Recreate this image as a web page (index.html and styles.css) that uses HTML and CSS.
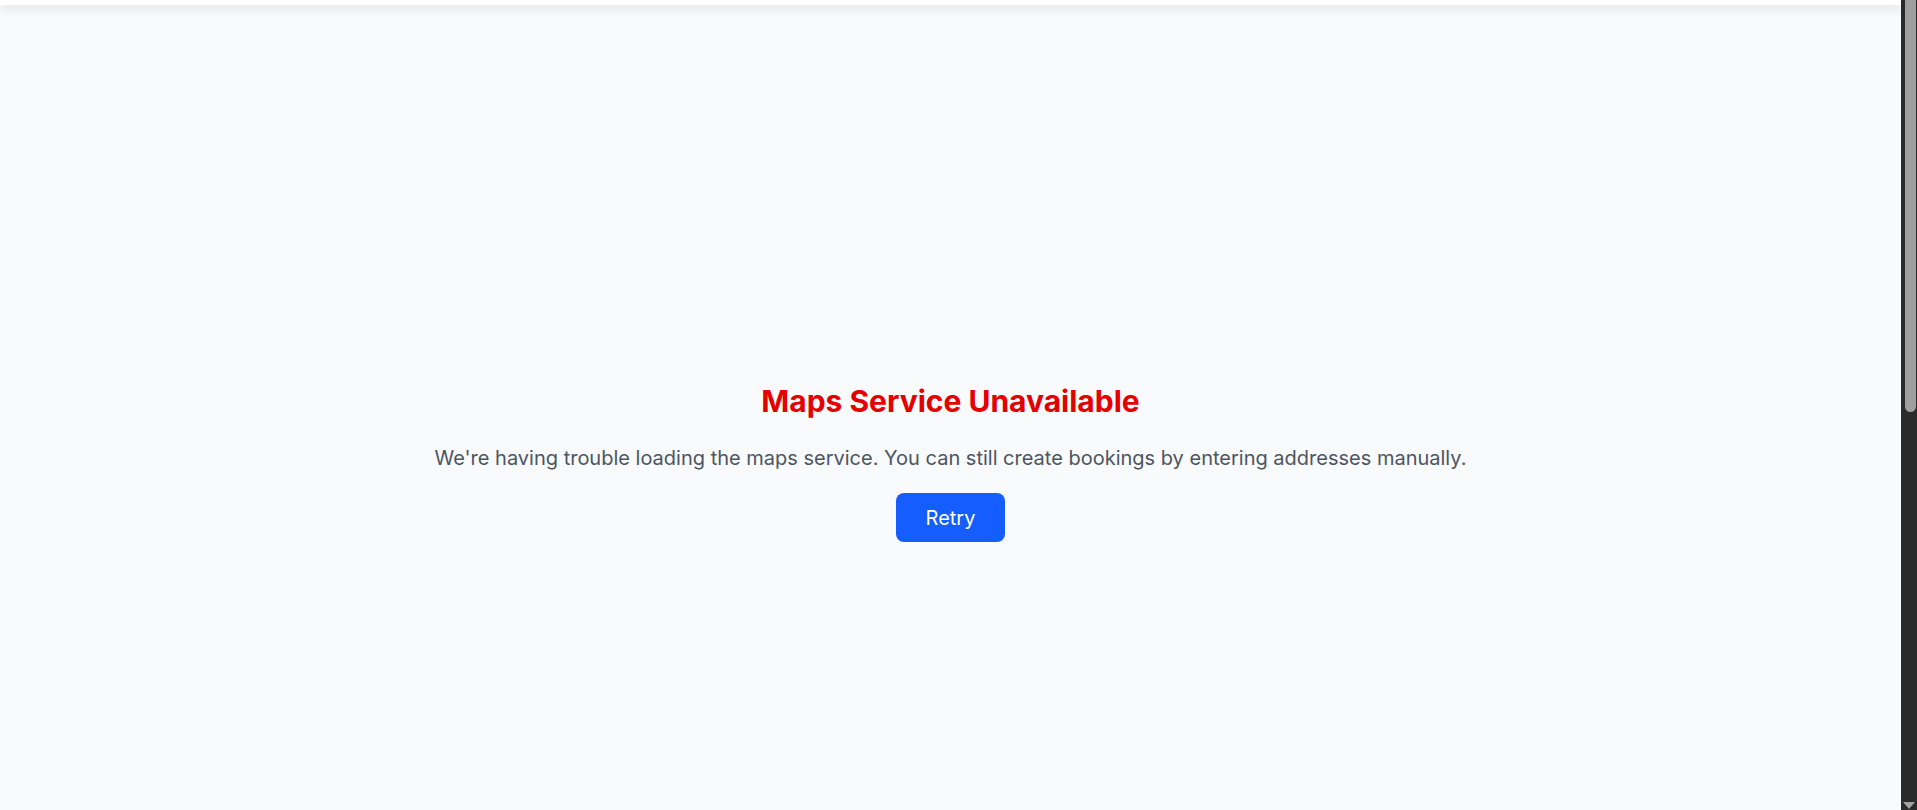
FILE: index.html
```html
<!DOCTYPE html>
<html lang="en">
<head>
<meta charset="utf-8">
<title>Maps Service Unavailable</title>
<link rel="stylesheet" href="styles.css">
</head>
<body>
  <div class="page">
    <header class="topbar"></header>
    <main class="map-area">
      <section class="error-box">
        <h2 class="error-title">Maps Service Unavailable</h2>
        <p class="error-text">We're having trouble loading the maps service. You can still create bookings by entering addresses manually.</p>
        <button class="retry-btn" type="button">Retry</button>
      </section>
    </main>
  </div>
  <div class="scrollbar" aria-hidden="true">
    <div class="scroll-thumb"></div>
    <div class="scroll-arrow"></div>
  </div>
</body>
</html>
```
FILE: styles.css
```css
html,
body {
  margin: 0;
  height: 100%;
  overflow: hidden;
  background: #f9fafb;
}
body {
  color: #4b5563;
  font-family: Inter, "Noto Sans", "Liberation Sans", sans-serif;
}
.page {
  margin-right: 16px;
  height: 100%;
  background: #f9fafb;
}
.topbar {
  height: 5px;
  background: #ffffff;
  box-shadow: 0 4px 10px rgba(0, 0, 0, 0.12);
  position: relative;
  z-index: 2;
}
.map-area {
  display: flex;
  justify-content: center;
  padding-top: 378px;
}
.error-box {
  display: flex;
  flex-direction: column;
  align-items: center;
  text-align: center;
}
.error-title {
  margin: 0;
  font-size: 30px;
  line-height: 36px;
  font-weight: 700;
  color: #e50000;
}
.error-text {
  margin: 25px 0 0;
  font-size: 20px;
  line-height: 28px;
  color: #4b5563;
}
.retry-btn {
  margin-top: 21px;
  width: 109px;
  height: 49px;
  padding: 0;
  border: none;
  border-radius: 8px;
  background: #165dff;
  color: #ffffff;
  font-family: Inter, "Noto Sans", sans-serif;
  font-size: 20px;
  cursor: pointer;
}
.scrollbar {
  position: fixed;
  top: 0;
  right: 0;
  width: 16px;
  height: 100vh;
  background: #2b2b2b;
  display: flex;
  flex-direction: column;
  justify-content: space-between;
  align-items: flex-start;
}
.scroll-thumb {
  margin-left: 4px;
  width: 11px;
  height: 412px;
  background: #9f9f9f;
  border-radius: 0 0 6px 6px;
}
.scroll-arrow {
  margin: 0 0 0 2px;
  width: 0;
  height: 0;
  border-left: 6px solid transparent;
  border-right: 6px solid transparent;
  border-top: 7px solid #a3a3a3;
  margin-bottom: 1px;
}
```
